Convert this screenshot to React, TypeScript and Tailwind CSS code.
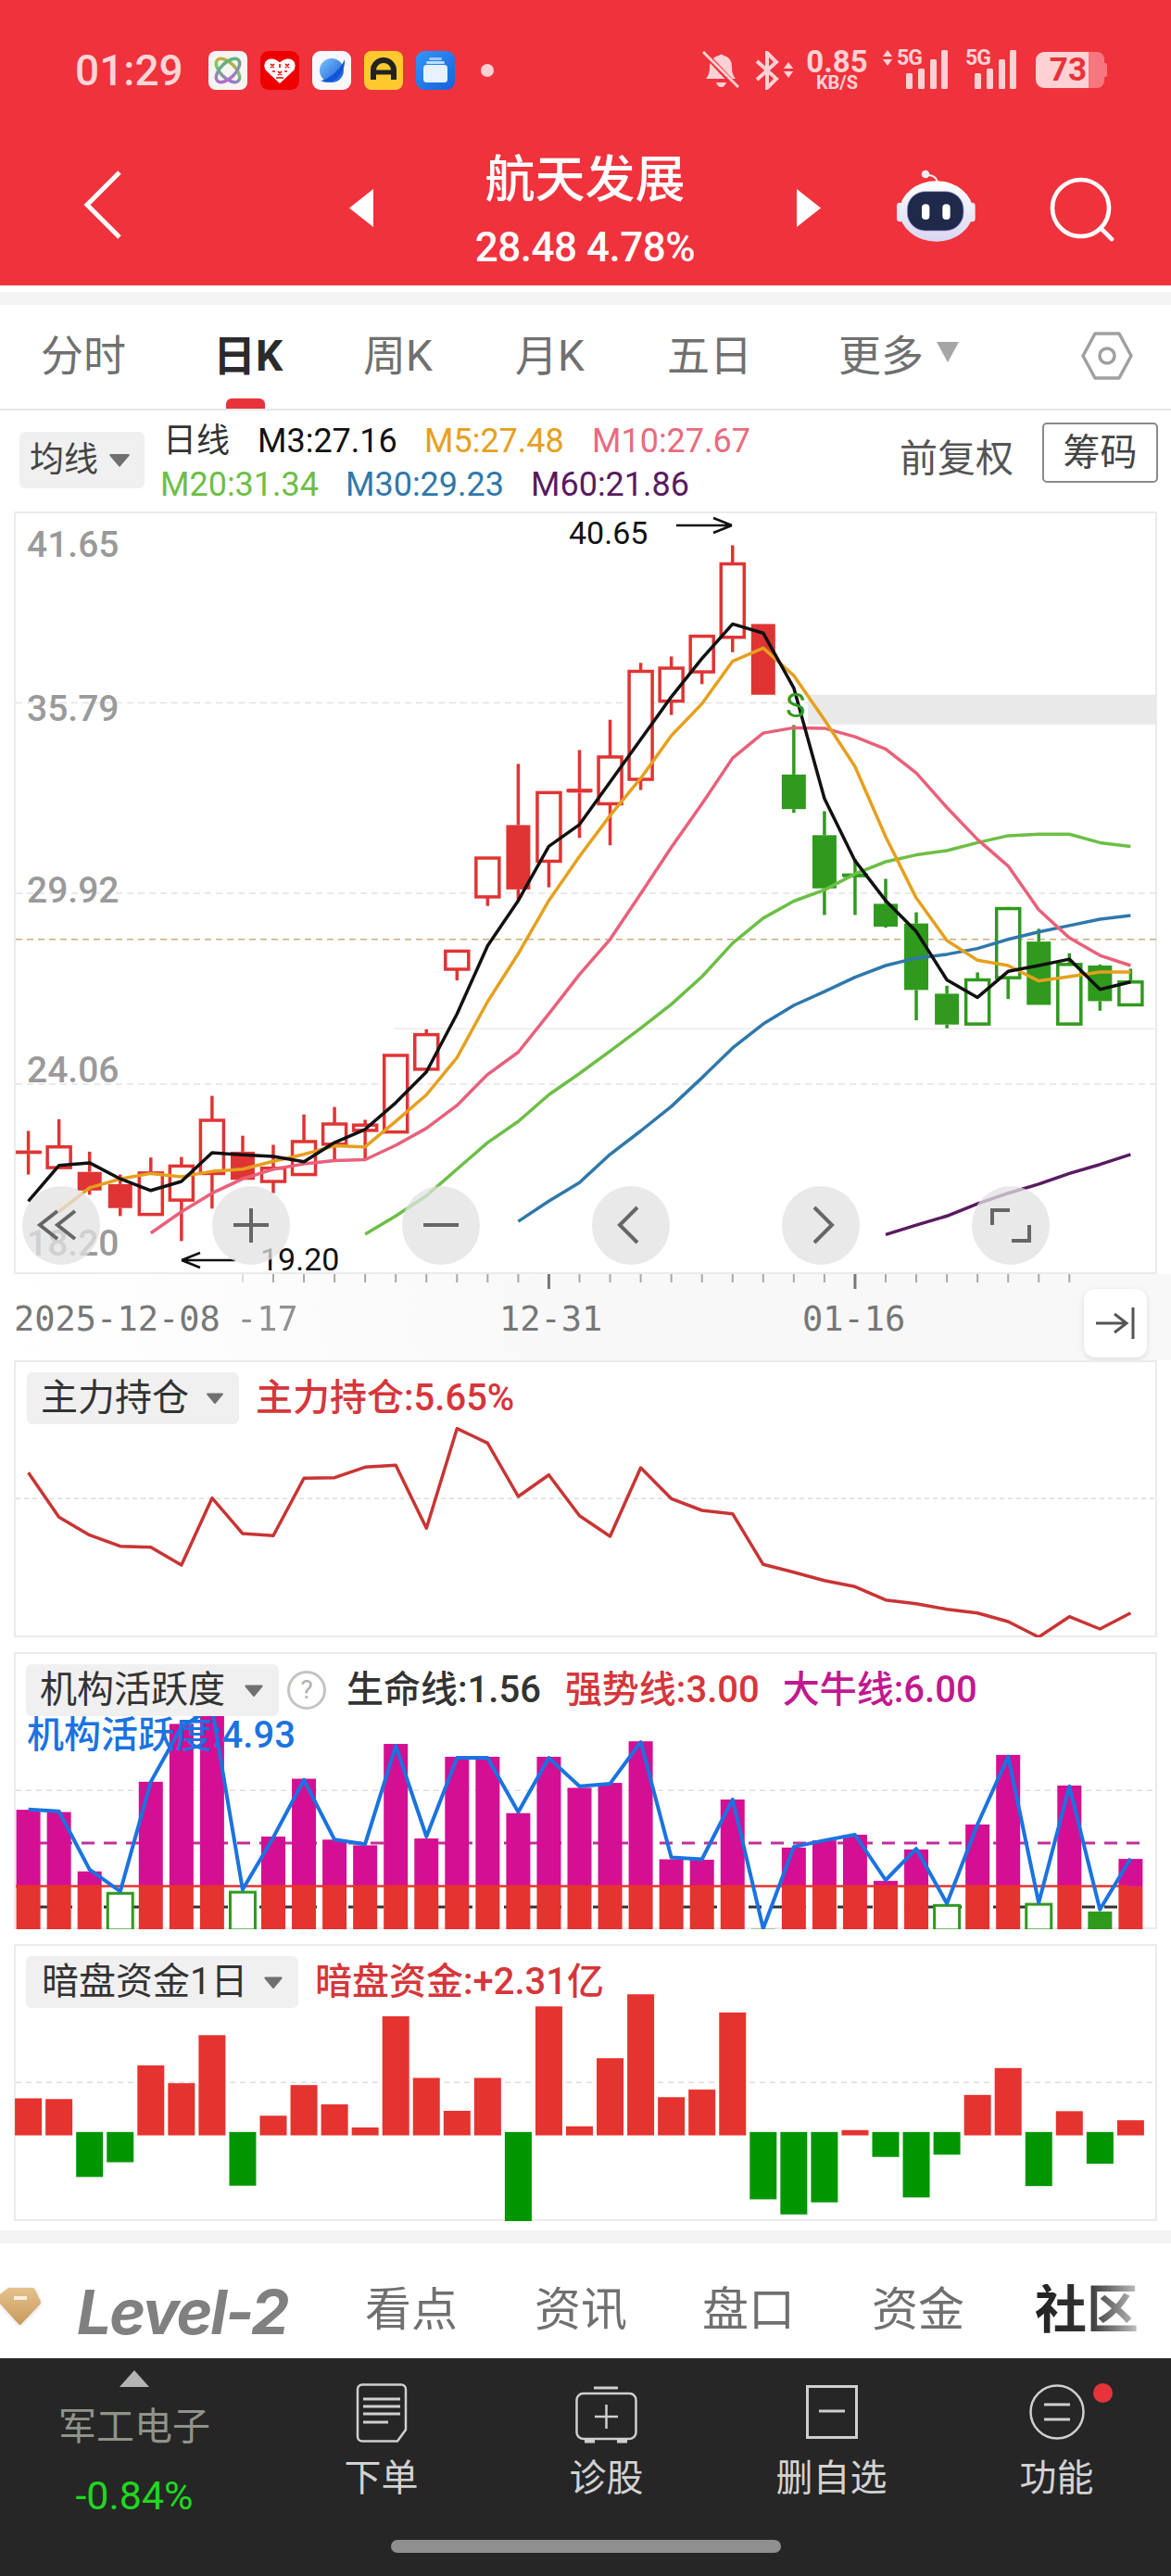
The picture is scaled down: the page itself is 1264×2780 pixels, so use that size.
import React from 'react'

// candle x position shared by every chart
const cx = (i: number) => 30.6 + 33.05 * i
// measurements below are taken off zoomed crops, converted to local chart px here
const kY = (z: number) => z / 1.742 - 2
const holdY = (z: number) => z / 3 - 28
const actY = (z: number) => z / 2.45 - 3
const darkY = (z: number) => z / 2.45 - 318

const pts = (ys: number[], start: number, toY: (z: number) => number) =>
    ys.map((z, i) => `${cx(start + i).toFixed(1)},${toY(z).toFixed(1)}`).join(' ')

type Candle = [number, number, number, number, 'h' | 'f']

const candles: Candle[] = [
    [1168, 1205, 1211, 1250, 'f'], [1146, 1198, 1237, 1237, 'h'], [1207, 1245, 1280, 1288, 'f'], [1250, 1268, 1313, 1328, 'f'],
    [1218, 1247, 1325, 1325, 'h'], [1217, 1234, 1298, 1375, 'h'], [1102, 1148, 1248, 1314, 'h'], [1177, 1207, 1260, 1260, 'f'],
    [1194, 1238, 1263, 1285, 'h'], [1137, 1188, 1250, 1250, 'h'], [1123, 1155, 1193, 1222, 'h'], [1147, 1157, 1167, 1220, 'h'],
    [1026, 1026, 1170, 1170, 'h'], [977, 987, 1052, 1052, 'h'], [830, 830, 864, 885, 'h'], [655, 655, 728, 745, 'h'],
    [478, 593, 714, 735, 'f'], [532, 532, 661, 710, 'h'], [452, 525, 532, 617, 'f'], [395, 465, 553, 631, 'h'],
    [288, 304, 507, 527, 'h'], [276, 298, 360, 386, 'h'], [238, 238, 305, 328, 'h'], [67, 102, 240, 268, 'h'],
    [215, 215, 348, 348, 'f'], [405, 498, 563, 570, 'f'], [567, 612, 712, 762, 'f'], [657, 686, 689, 762, 'f'],
    [694, 741, 784, 786, 'f'], [757, 778, 903, 960, 'f'], [895, 910, 968, 975, 'f'], [870, 884, 967, 967, 'h'],
    [747, 750, 880, 920, 'h'], [788, 812, 931, 931, 'f'], [834, 855, 967, 967, 'h'], [855, 857, 924, 942, 'f'],
    [863, 888, 931, 931, 'h'],
]

const maLines: { start: number; color: string; ys: number[] }[] = [
    { start: 28, color: '#5a1a62', ys: [1363, 1345, 1328, 1305, 1285, 1268, 1248, 1231, 1212] },
    { start: 16, color: '#2f78ab', ys: [1338, 1300, 1265, 1212, 1168, 1122, 1068, 1012, 967, 932, 906, 879, 857, 843, 836, 825, 808, 794, 782, 770, 763] },
    { start: 11, color: '#6cbf45', ys: [1362, 1328, 1290, 1240, 1190, 1150, 1100, 1060, 1018, 975, 930, 878, 815, 768, 736, 715, 685, 662, 649, 641, 626, 613, 610, 610, 626, 633] },
    { start: 4, color: '#e9607a', ys: [1360, 1320, 1285, 1258, 1240, 1230, 1224, 1222, 1195, 1163, 1120, 1062, 1020, 948, 874, 808, 722, 635, 553, 467, 420, 410, 411, 427, 450, 495, 560, 620, 670, 752, 805, 838, 857] },
    { start: 1, color: '#e6a01e', ys: [1320, 1275, 1258, 1248, 1254, 1244, 1240, 1225, 1212, 1196, 1198, 1150, 1100, 1030, 925, 835, 735, 652, 575, 505, 425, 365, 285, 260, 312, 395, 483, 615, 730, 810, 847, 857, 886, 878, 869, 869] },
    { start: 0, color: '#111111', ys: [1300, 1233, 1228, 1258, 1280, 1263, 1209, 1213, 1216, 1226, 1190, 1165, 1115, 1057, 948, 820, 735, 633, 592, 512, 432, 352, 280, 215, 232, 335, 543, 660, 735, 793, 884, 917, 868, 857, 845, 902, 888] },
]

const holdLine = [448, 592, 650, 686, 689, 747, 530, 645, 652, 466, 464, 430, 424, 628, 305, 352, 525, 455, 587, 654, 432, 532, 570, 581, 745, 770, 797, 817, 860, 872, 890, 902, 930, 980, 914, 954, 902]

const actTops = [424, 430, 587, 0, 350, 197, 150, 0, 495, 342, 503, 518, 250, 500, 284, 284, 433, 284, 366, 353, 243, 555, 556, 397, 0, 524, 505, 490, 612, 529, 0, 463, 279, 0, 360, 0, 554]
const actHollow: Record<number, number> = { 3: 645, 7: 642, 30: 677, 33: 674 }
const actLine = [423, 428, 582, 640, 350, 205, 155, 635, 497, 345, 503, 515, 255, 495, 287, 287, 430, 287, 362, 355, 245, 550, 555, 397, 738, 522, 505, 490, 610, 527, 672, 463, 283, 670, 362, 688, 553]

// [edge of the bar away from the zero line, green?]
const darkBars: [number, boolean][] = [
    [1187, false], [1189, false], [1395, true], [1356, true], [1100, false], [1147, false], [1020, false], [1418, true],
    [1233, false], [1152, false], [1203, false], [1264, false], [970, false], [1133, false], [1220, false], [1133, false],
    [1513, true], [944, false], [1261, false], [1081, false], [912, false], [1184, false], [1164, false], [960, false],
    [1454, true], [1494, true], [1462, true], [1271, false], [1342, true], [1449, true], [1336, true], [1178, false],
    [1107, false], [1419, true], [1221, false], [1360, true], [1245, false],
]

const Tri = ({ className }: { className: string }) => (
    <svg viewBox="0 0 20 14" className={className}>
        <path d="M2 1.5h16a1 1 0 0 1 .8 1.6l-8 9.4a1 1 0 0 1-1.6 0l-8-9.4A1 1 0 0 1 2 1.5Z" fill="#707070" />
    </svg>
)

const StatusApps = () => (
    <div className="flex items-center gap-[14px]">
        <svg viewBox="0 0 42 42" className="w-[42px] h-[42px]">
            <defs>
                <linearGradient id="appA" x1="0" y1="0" x2="1" y2="1">
                    <stop offset="0" stopColor="#f59a3c" />
                    <stop offset="0.5" stopColor="#6ccf5e" />
                    <stop offset="1" stopColor="#a35cf0" />
                </linearGradient>
                <linearGradient id="appB" x1="1" y1="0" x2="0" y2="1">
                    <stop offset="0" stopColor="#45c96a" />
                    <stop offset="1" stopColor="#c95ce0" />
                </linearGradient>
            </defs>
            <rect width="42" height="42" rx="8" fill="#f7f4f4" />
            <ellipse cx="21" cy="21" rx="16" ry="8" fill="none" stroke="url(#appA)" strokeWidth="3.5" transform="rotate(45 21 21)" />
            <ellipse cx="21" cy="21" rx="16" ry="8" fill="none" stroke="url(#appB)" strokeWidth="3.5" transform="rotate(-45 21 21)" />
        </svg>
        <svg viewBox="0 0 42 42" className="w-[42px] h-[42px]">
            <rect width="42" height="42" rx="9" fill="#ee0000" />
            <path d="M21 35 6 21c-3.500-5-1-12 5-12.500 4-.3 7.500 1.500 10 4 2.500-2.500 6-4.300 10-4 6 .5 8.500 7.500 5 12.500Z" fill="#fff" />
            <path d="M11 14l4 4M15 14l-4 4M27 14l4 4M31 14l-4 4M19 22l4 4M23 22l-4 4M13 22h3M26 22h3M21 14v4M17 29h8" stroke="#ee0000" strokeWidth="1.600" />
        </svg>
        <svg viewBox="0 0 42 42" className="w-[42px] h-[42px]">
            <defs>
                <linearGradient id="appC" x1="0" y1="0" x2="1" y2="1">
                    <stop offset="0" stopColor="#7cc4fb" />
                    <stop offset="1" stopColor="#1257d8" />
                </linearGradient>
            </defs>
            <rect width="42" height="42" rx="9" fill="#f7f8fb" />
            <circle cx="21" cy="21" r="13" fill="url(#appC)" />
            <path d="M9 32C16 32 31 20 35 9c1 9-5 21-14 24-4 1.300-8 1-12-1Z" fill="#0f55d4" />
        </svg>
        <svg viewBox="0 0 42 42" className="w-[42px] h-[42px]">
            <rect width="42" height="42" rx="8" fill="#fdc92f" />
            <path d="M10 31V21a11 11 0 0 1 22 0v10" fill="none" stroke="#222" strokeWidth="6" />
            <path d="M11 23h20" stroke="#222" strokeWidth="5" />
        </svg>
        <svg viewBox="0 0 42 42" className="w-[42px] h-[42px]">
            <defs>
                <linearGradient id="appE" x1="0" y1="0" x2="1" y2="1">
                    <stop offset="0" stopColor="#2f97fb" />
                    <stop offset="1" stopColor="#1760dc" />
                </linearGradient>
            </defs>
            <rect width="42" height="42" rx="9" fill="url(#appE)" />
            <rect x="14" y="7" width="14" height="3" rx="1.500" fill="#9cc9fb" />
            <rect x="11" y="11" width="20" height="3" rx="1.500" fill="#bcdcfd" />
            <rect x="8" y="15" width="26" height="19" rx="3.500" fill="#e8f2fe" />
        </svg>
    </div>
)

const UpDown = ({ className }: { className: string }) => (
    <svg viewBox="0 0 12 18" className={className}>
        <path d="M6 0l5.500 7.500H.5ZM6 18 .5 10.500h11Z" fill="#ffd1d4" />
    </svg>
)

const Signal = () => (
    <svg viewBox="0 0 46 42" className="w-[46px] h-[42px]">
        <rect x="0" y="25" width="7" height="17" rx="1.500" fill="#ffd1d4" />
        <rect x="13" y="20" width="7" height="22" rx="1.500" fill="#ffd1d4" />
        <rect x="26" y="10" width="7" height="32" rx="1.500" fill="#ffd1d4" />
        <rect x="38" y="0" width="7" height="42" rx="1.500" fill="#ffd1d4" />
    </svg>
)

const StatusRight = () => (
    <div className="ml-auto mr-[69px] flex items-center h-[43px] text-[#ffd1d4]">
        <svg viewBox="0 0 40 42" className="w-[40px] h-[42px]">
            <path d="M18 5a3 3 0 0 1 5 0c6 1 9 6 9 12 0 6 1 9 4 13H4c3-4 4-7 4-13 0-6 4-11 10-12Z" fill="#ffd1d4" />
            <path d="M15 34h11c-1 3-3 5-5.500 5S16 37 15 34Z" fill="#ffd1d4" />
            <path d="M2 2l36 38" stroke="#f0323c" strokeWidth="6" />
            <path d="M1 1l38 38" stroke="#ffd1d4" strokeWidth="3" />
        </svg>
        <div className="ml-[17px] flex items-center w-[42px]">
            <svg viewBox="0 0 26 42" className="w-[26px] h-[42px]">
                <path d="M2 11 23 30 13 40V2l10 10L2 31" fill="none" stroke="#ffd1d4" strokeWidth="4" />
            </svg>
            <UpDown className="ml-[4px] w-[12px] h-[17px]" />
        </div>
        <div className="ml-[12px] w-[69px] flex flex-col items-center font-bold">
            <span className="text-[33px] leading-[25px]">0.85</span>
            <span className="mt-[2px] text-[20px] leading-[17px]">KB/S</span>
        </div>
        <div className="ml-[14px] w-[72px] relative h-[43px]">
            <UpDown className="absolute left-0 top-0 w-[12px] h-[17px]" />
            <span className="absolute left-[16px] top-0 text-[23px] leading-[18px] font-bold tracking-[-1px]">5G</span>
            <div className="absolute right-0 top-0"><Signal /></div>
        </div>
        <div className="ml-[18px] w-[56px] relative h-[43px]">
            <span className="absolute left-0 top-0 text-[23px] leading-[18px] font-bold tracking-[-1px]">5G</span>
            <div className="absolute right-0 top-0"><Signal /></div>
        </div>
        <div className="ml-[20px] w-[77px] h-[39px] flex">
            <div className="w-[57px] h-full bg-[#ffd1d4] rounded-l-[9px] flex items-center justify-end pr-[2px]">
                <span className="text-[35px] leading-none font-bold text-[#e8323a]">73</span>
            </div>
            <div className="w-[17px] h-full bg-[#f6777e] rounded-r-[8px]" />
            <div className="w-[3px] h-[15px] my-auto bg-[#f6777e] rounded-r-[2px]" />
        </div>
    </div>
)

const Robot = () => (
    <svg viewBox="50 30 255 240" className="w-[85px] h-[80px]">
        <defs>
            <linearGradient id="robotShell" x1="0" y1="0" x2="0" y2="1">
                <stop offset="0" stopColor="#ffffff" />
                <stop offset="1" stopColor="#d9d6f0" />
            </linearGradient>
        </defs>
        <path d="M143 50c20 0 36 6 38 24" fill="none" stroke="#f4e9ee" strokeWidth="6" />
        <circle cx="143" cy="48" r="13" fill="#f8eef2" />
        <rect x="50" y="140" width="22" height="62" rx="10" fill="#e9e7f7" />
        <rect x="282" y="140" width="22" height="62" rx="10" fill="#e9e7f7" />
        <ellipse cx="178" cy="168" rx="119" ry="98" fill="url(#robotShell)" />
        <rect x="84" y="104" width="182" height="127" rx="58" fill="#1f2a4b" stroke="#a48fe6" strokeWidth="2" />
        <rect x="131" y="145" width="25" height="50" rx="12" fill="#fff" />
        <rect x="198" y="145" width="25" height="50" rx="12" fill="#fff" />
    </svg>
)

const Header = () => (
    <div className="h-[308px] bg-[#f0323c] pt-[54px]">
        <div className="flex items-center h-[43px] pl-[81px]">
            <span className="w-[144px] text-[46px] leading-none font-medium text-[#fbd5d7]">01:29</span>
            <StatusApps />
            <span className="ml-[28px] w-[14px] h-[14px] rounded-full bg-[#ffd1d4]" />
            <StatusRight />
        </div>
        <div className="mt-[69px] flex items-start pl-[90px]">
            <svg viewBox="0 0 42 74" className="mt-[18px] w-[42px] h-[74px]">
                <path d="M39 2 4 37l35 35" fill="none" stroke="#fff" strokeWidth="5" />
            </svg>
            <svg viewBox="0 0 26 41" className="ml-[245px] mt-[38px] w-[26px] h-[41px]">
                <path d="M26 0v41L0 20.500Z" fill="#fff" />
            </svg>
            <div className="w-[457px] flex flex-col items-center text-white">
                <span className="text-[54px] leading-[58px] font-medium">航天发展</span>
                <span className="mt-[18px] text-[44px] leading-[50px] font-medium tracking-[-0.5px]">28.48 4.78%</span>
            </div>
            <svg viewBox="0 0 26 41" className="mt-[38px] w-[26px] h-[41px]">
                <path d="M0 0v41l26-20.500Z" fill="#fff" />
            </svg>
            <div className="ml-[82px] mt-[16px]"><Robot /></div>
            <svg viewBox="540 50 215 220" className="ml-[79px] mt-[23px] w-[72px] h-[73px]">
                <circle cx="643" cy="157" r="92" fill="none" stroke="#fff" strokeWidth="14" />
                <path d="M708 222l36 36" stroke="#fff" strokeWidth="14" strokeLinecap="round" />
            </svg>
        </div>
    </div>
)

const TabBar = () => (
    <div className="relative h-[114px] border-b-2 border-[#e6e6e6] flex items-center pl-[44px] pb-[2px] text-[46px] leading-none whitespace-nowrap text-[#707070]">
        <span className="w-[93px]">分时</span>
        <span className="ml-[93px] w-[77px] font-bold text-[#2b2b2b]">日K</span>
        <span className="ml-[85px] w-[78px]">周K</span>
        <span className="ml-[86px] w-[78px]">月K</span>
        <span className="ml-[86px] w-[93px]">五日</span>
        <span className="ml-[92px] w-[93px]">更多</span>
        <svg viewBox="0 0 26 22" className="ml-[12px] -mt-[8px] w-[26px] h-[22px]">
            <path d="M1 0h24L13 22Z" fill="#a6a6a6" />
        </svg>
        <svg viewBox="0 0 56 54" className="ml-[131px] w-[56px] h-[54px]">
            <path d="M15 3h26l13 24-13 24H15L2 27Z" fill="none" stroke="#a0a0a0" strokeWidth="3.500" strokeLinejoin="round" />
            <circle cx="28" cy="27" r="8" fill="none" stroke="#a0a0a0" strokeWidth="3.500" />
        </svg>
        <span className="absolute left-[244px] bottom-0 w-[42px] h-[11px] rounded-t-[6px] bg-[#e8333a]" />
    </div>
)

const Legend = () => (
    <div className="flex h-[109px]">
        <div className="ml-[21px] mt-[23px] w-[135px] h-[61px] rounded-[6px] bg-[#f0f0f0] flex items-center pl-[11px]">
            <span className="text-[37px] leading-none text-[#444]">均线</span>
            <Tri className="ml-[11px] w-[24px] h-[17px]" />
        </div>
        <div className="ml-[20px] mt-[10px] text-[36px] leading-[47px]">
            <div className="flex">
                <span className="w-[102px] text-[#333]">日线</span>
                <span className="w-[180px] text-[#111]">M3:27.16</span>
                <span className="w-[181px] text-[#e6a01e]">M5:27.48</span>
                <span className="text-[#ea6a7e]">M10:27.67</span>
            </div>
            <div className="flex -ml-[3px]">
                <span className="w-[200px] text-[#6cbf45]">M20:31.34</span>
                <span className="w-[200px] text-[#2f78ab]">M30:29.23</span>
                <span className="text-[#5a1a62]">M60:21.86</span>
            </div>
        </div>
        <span className="ml-auto mt-[27px] text-[41px] leading-[50px] text-[#555]">前复权</span>
        <div className="ml-[31px] mr-[14px] mt-[13px] w-[125px] h-[65px] rounded-[5px] border-2 border-[#8a8a8a] flex items-center justify-center text-[40px] leading-none text-[#444]">
            筹码
        </div>
    </div>
)

const priceLabels: [string, string][] = [
    ['41.65', 'top-[13px]'], ['35.79', 'top-[190px]'], ['29.92', 'top-[386px]'], ['24.06', 'top-[580px]'], ['18.20', 'top-[767px]'],
]

const RoundBtn = ({ className, children }: { className: string; children: React.ReactNode }) => (
    <div className={`absolute top-[728px] w-[84px] h-[85px] rounded-full bg-[#e2e2e2]/75 flex items-center justify-center ${className}`}>
        <svg viewBox="0 0 84 85" className="w-[84px] h-[85px]" fill="none" stroke="#666" strokeWidth="4">
            {children}
        </svg>
    </div>
)

const KChart = () => (
    <div className="relative h-[823px]">
        <div className="mx-[15px] h-full border-2 border-[#ebebeb]" />
        <svg viewBox="0 0 1264 823" className="absolute inset-0 w-full h-full">
            {[363, 721, 1080].map(z => (
                <line key={z} x1="17" x2="1248" y1={kY(z)} y2={kY(z)} stroke="#e4e4e4" strokeWidth="1.5" strokeDasharray="7 5" />
            ))}
            <line x1="425" x2="1248" y1={kY(976)} y2={kY(976)} stroke="#ececec" strokeWidth="1.5" />
            <line x1="17" x2="1248" y1={kY(808)} y2={kY(808)} stroke="#c9ae7d" strokeWidth="1.5" strokeDasharray="7 5" />
            <rect x="872" y={kY(348)} width="376" height="32" fill="#e9e9e9" />
            {candles.map(([high, top, bottom, low, kind], i) => {
                const color = i < 25 ? '#e03434' : '#2f9a1d'
                const x = cx(i)
                return (
                    <g key={i}>
                        <line x1={x} x2={x} y1={kY(high)} y2={kY(top)} stroke={color} strokeWidth="3.5" />
                        <line x1={x} x2={x} y1={kY(bottom)} y2={kY(low)} stroke={color} strokeWidth="3.5" />
                        {kind === 'h' ? (
                            <rect x={x - 12.5} y={kY(top)} width="25" height={kY(bottom) - kY(top)} fill="#fff" stroke={color} strokeWidth="3.5" />
                        ) : (
                            <rect x={x - 13} y={kY(top)} width="26" height={Math.max(3, kY(bottom) - kY(top))} fill={color} />
                        )}
                    </g>
                )
            })}
            <line x1="17" x2="45" y1={kY(1208)} y2={kY(1208)} stroke="#e03434" strokeWidth="3.5" />
            <line x1={cx(18) - 14} x2={cx(18) + 14} y1={kY(528)} y2={kY(528)} stroke="#e03434" strokeWidth="3.5" />
            <line x1={cx(27) - 14} x2={cx(27) + 14} y1={kY(687)} y2={kY(687)} stroke="#2f9a1d" strokeWidth="3.5" />
            {maLines.map(l => (
                <polyline key={l.color} points={pts(l.ys, l.start, kY)} fill="none" stroke={l.color} strokeWidth="3.5" strokeLinejoin="round" />
            ))}
            <path d="M196 808h58M196 808l20-8M196 808l20 8" fill="none" stroke="#111" strokeWidth="2.500" />
            <path d="M730 15h60M790 15l-20-8M790 15l-20 8" fill="none" stroke="#111" strokeWidth="2.500" />
        </svg>
        {priceLabels.map(([t, pos]) => (
            <span key={t} className={`absolute left-[29px] text-[39px] leading-[46px] font-medium text-[#9a9a9a] ${pos}`}>{t}</span>
        ))}
        <span className="absolute left-[614px] top-[2px] text-[34px] leading-[42px] text-[#111]">40.65</span>
        <span className="absolute left-[281px] top-[786px] text-[34px] leading-[42px] text-[#111]">19.20</span>
        <span className="absolute left-[848px] top-[190px] text-[36px] leading-[40px] text-[#2f9a1d]">S</span>
        <RoundBtn className="left-[24px]">
            <path d="M38 27 19 42l19 15M57 27 38 42l19 15" />
        </RoundBtn>
        <RoundBtn className="left-[229px]">
            <path d="M23 42h38M42 24v37" />
        </RoundBtn>
        <RoundBtn className="left-[434px]">
            <path d="M23 42h38" />
        </RoundBtn>
        <RoundBtn className="left-[639px]">
            <path d="M49 23 30 42l19 19" />
        </RoundBtn>
        <RoundBtn className="left-[844px]">
            <path d="M35 23l19 19-19 19" />
        </RoundBtn>
        <RoundBtn className="left-[1049px]">
            <path d="M22 42V26h19M62 42v17H43" />
        </RoundBtn>
    </div>
)

const AxisRow = () => (
    <div className="relative h-[93px] bg-gradient-to-r from-white via-[#f8f8f8] to-[#f8f8f8]">
        <svg viewBox="0 0 1264 18" className="w-full h-[18px] block">
            {Array.from({ length: 28 }).map((_, i) => {
                const idx = i + 7
                const big = idx === 17 || idx === 27
                return (
                    <line key={i} x1={cx(idx)} x2={cx(idx)} y1="0" y2={big ? 16 : 9}
                        stroke={big ? '#777' : idx === 7 ? '#ddd' : '#a8a8a8'} strokeWidth={big ? 3 : 2} />
                )
            })}
        </svg>
        <div className="flex pl-[15px] mt-[11px] font-['DejaVu_Sans_Mono'] text-[37px] leading-[40px] text-[#777]">
            <span className="w-[240px]">2025-12-08</span>
            <span className="w-[284px] opacity-80">-17</span>
            <span className="w-[327px]">12-31</span>
            <span>01-16</span>
        </div>
        <div className="absolute left-[1170px] top-[16px] w-[68px] h-[74px] rounded-[12px] bg-white shadow-[0_2px_6px_rgba(0,0,0,0.12)] flex items-center justify-center">
            <svg viewBox="0 0 42 34" className="w-[42px] h-[34px]" fill="none" stroke="#555" strokeWidth="3">
                <path d="M0 17h32M20 7l13 10-13 10M40 0v34" />
            </svg>
        </div>
    </div>
)

const Chip = ({ text, className }: { text: string; className: string }) => (
    <div className={`h-[56px] rounded-[6px] bg-[#f0f0f0] flex items-center text-[40px] leading-none text-[#333] ${className}`}>
        <span>{text}</span>
    </div>
)

const Panel = ({ children, chart, className }: { children: React.ReactNode; chart: React.ReactNode; className?: string }) => (
    <div className={`relative h-[299px] ${className ?? ''}`}>
        <div className="mx-[15px] h-full border-2 border-[#ebebeb]" />
        <svg viewBox="0 0 1264 299" className="absolute inset-0 w-full h-full">{chart}</svg>
        {children}
    </div>
)

const HoldPanel = () => (
    <Panel
        chart={
            <>
                <line x1="17" x2="1248" y1={holdY(532)} y2={holdY(532)} stroke="#dedede" strokeWidth="1.5" strokeDasharray="5 4" />
                <polyline points={pts(holdLine, 0, holdY)} fill="none" stroke="#c93434" strokeWidth="3.5" strokeLinejoin="round" />
            </>
        }
    >
        <div className="absolute left-[29px] top-[13px] flex items-center">
            <Chip text="主力持仓" className="w-[229px] pl-[15px]" />
            <Tri className="-ml-[36px] w-[20px] h-[14px]" />
            <span className="ml-[34px] text-[40px] leading-none font-medium text-[#d6363a]">主力持仓:5.65%</span>
        </div>
    </Panel>
)

const ActivityPanel = () => (
    <Panel
        className="mt-[16px]"
        chart={
            <>
                <line x1="17" x2="1248" y1={actY(373)} y2={actY(373)} stroke="#dedede" strokeWidth="1.5" strokeDasharray="6 5" />
                <line x1="40" x2="1232" y1={actY(681)} y2={actY(681)} stroke="#333" strokeWidth="3" strokeDasharray="14 10" />
                <line x1="40" x2="1232" y1={actY(512)} y2={actY(512)} stroke="#c0319a" strokeWidth="3" strokeDasharray="14 10" />
                {actTops.map((top, i) => {
                    const x = cx(i) - 13
                    if (i in actHollow) {
                        return <rect key={i} x={x - 0.5} y={actY(actHollow[i])} width="27" height={actY(742) - actY(actHollow[i])} fill="#fff" stroke="#2f9a1d" strokeWidth="3" />
                    }
                    if (i === 35) return <rect key={i} x={x} y={actY(693)} width="26" height={actY(742) - actY(693)} fill="#2f9a1d" />
                    if (i === 24) return <rect key={i} x={x} y={actY(739)} width="26" height="2" fill="#2f9a1d" />
                    return (
                        <g key={i}>
                            <rect x={x} y={actY(top)} width="26" height={actY(627) - actY(top)} fill="#d40f93" />
                            <rect x={x} y={actY(627)} width="26" height={actY(742) - actY(627)} fill="#e5332f" />
                        </g>
                    )
                })}
                <line x1="17" x2="1218" y1={actY(626)} y2={actY(626)} stroke="#e5332f" strokeWidth="2.500" />
                <polyline points={pts(actLine, 0, actY)} fill="none" stroke="#1a73e0" strokeWidth="4" strokeLinejoin="round" />
            </>
        }
    >
        <div className="absolute left-[28px] top-[13px] flex items-center">
            <Chip text="机构活跃度" className="w-[273px] pl-[15px]" />
            <Tri className="-ml-[38px] w-[22px] h-[15px]" />
            <span className="ml-[25px] w-[42px] h-[42px] rounded-full border-[3px] border-[#c4c4c4] flex items-center justify-center text-[28px] leading-none text-[#b0b0b0]">?</span>
            <span className="ml-[22px] text-[40px] leading-none font-medium text-[#333]">生命线:1.56</span>
            <span className="ml-[26px] text-[40px] leading-none font-medium text-[#d6363a]">强势线:3.00</span>
            <span className="ml-[25px] text-[40px] leading-none font-medium text-[#c2188f]">大牛线:6.00</span>
        </div>
        <span className="absolute left-[29px] top-[70px] text-[40px] leading-none font-medium text-[#1a73e0]">机构活跃度:4.93</span>
    </Panel>
)

const DarkPanel = () => (
    <Panel
        className="mt-[16px]"
        chart={
            <>
                <line x1="17" x2="1248" y1={darkY(1145)} y2={darkY(1145)} stroke="#dedede" strokeWidth="1.5" strokeDasharray="6 5" />
                {darkBars.map(([edge, green], i) => {
                    const top = green ? darkY(1276) : darkY(edge)
                    const bottom = green ? darkY(edge) : darkY(1285)
                    return <rect key={i} x={cx(i) - 14.5} y={top} width="29" height={bottom - top} fill={green ? '#009600' : '#e5332f'} />
                })}
            </>
        }
    >
        <div className="absolute left-[28px] top-[13px] flex items-center">
            <Chip text="暗盘资金1日" className="w-[294px] pl-[17px]" />
            <Tri className="-ml-[38px] w-[22px] h-[15px]" />
            <span className="ml-[34px] text-[40px] leading-none font-medium text-[#d6363a]">暗盘资金:+2.31亿</span>
        </div>
    </Panel>
)

const BottomTabs = () => (
    <div className="h-[124px] flex items-start pt-[47px] text-[50px] leading-none text-[#707070]">
        <svg viewBox="0 0 44 42" className="w-[44px] h-[42px] drop-shadow-sm">
            <defs>
                <linearGradient id="gem" x1="0" y1="0" x2="0" y2="1">
                    <stop offset="0" stopColor="#e4c28c" />
                    <stop offset="1" stopColor="#c79a5c" />
                </linearGradient>
            </defs>
            <path d="M9 1h26a3 3 0 0 1 3 2l6 13a3 3 0 0 1-1 3L23 40a2 2 0 0 1-3 0L1 19a3 3 0 0 1-1-3V8Z" fill="url(#gem)" />
            <rect x="15" y="10" width="14" height="4" fill="#f8efe0" />
        </svg>
        <span className="ml-[39px] -mt-[6px] w-[267px] text-[66px] font-bold italic font-['Inter'] tracking-[-2px] text-[#808080]">Level-2</span>
        <span className="ml-[44px] w-[100px]">看点</span>
        <span className="ml-[83px] w-[100px]">资讯</span>
        <span className="ml-[81px] w-[100px]">盘口</span>
        <span className="ml-[83px] w-[100px]">资金</span>
        <span className="ml-[76px] font-bold text-[56px] -mt-[3px] bg-gradient-to-r from-[#222] via-[#333] to-[#c4c4c4] bg-clip-text text-transparent">社区</span>
    </div>
)

const FootAction = ({ label, children }: { label: string; children: React.ReactNode }) => (
    <div className="w-[243px] flex flex-col items-center pt-[27px]">
        <div className="relative h-[64px] flex items-start justify-center">{children}</div>
        <span className="mt-[17px] text-[40px] leading-[44px] text-[#d2d2d2]">{label}</span>
    </div>
)

const Footer = () => (
    <div className="relative h-[235px] bg-[#262626] flex items-start">
        <div className="w-[290px] flex flex-col items-center pt-[13px]">
            <svg viewBox="0 0 32 18" className="w-[32px] h-[18px]">
                <path d="M16 0l16 18H0Z" fill="#b4b4b4" />
            </svg>
            <span className="mt-[19px] text-[41px] leading-[48px] text-[#8f9488]">军工电子</span>
            <span className="mt-[25px] text-[43px] leading-[50px] text-[#1fd81f]">-0.84%</span>
        </div>
        <FootAction label="下单">
            <svg viewBox="0 0 56 64" className="w-[56px] h-[64px]" fill="none" stroke="#cfcfcf" strokeWidth="2.500">
                <path d="M7 1.500h42a5 5 0 0 1 5 5V50l-9 12.500H7a5 5 0 0 1-5-5v-51a5 5 0 0 1 5-5Z" />
                <path d="M8 17h40M8 25h40M8 33h40M8 42h27" strokeWidth="3" />
            </svg>
        </FootAction>
        <FootAction label="诊股">
            <svg viewBox="0 0 67 62" className="w-[67px] h-[62px] mt-[3px]" fill="none" stroke="#cfcfcf" strokeWidth="2.500">
                <path d="M20 2h26" strokeWidth="3" />
                <rect x="1.500" y="8" width="64" height="49" rx="7" />
                <path d="M33.500 20v26M21 33h25" strokeWidth="2.500" />
                <path d="M10 59h11M45 59h11" strokeWidth="5" />
            </svg>
        </FootAction>
        <FootAction label="删自选">
            <svg viewBox="0 0 56 58" className="w-[56px] h-[58px] mt-[2px]" fill="none" stroke="#cfcfcf" strokeWidth="3">
                <rect x="1.500" y="1.500" width="53" height="55" />
                <path d="M14 28h28" />
            </svg>
        </FootAction>
        <FootAction label="功能">
            <svg viewBox="0 0 60 60" className="w-[60px] h-[60px] mt-[1px]" fill="none" stroke="#cfcfcf" strokeWidth="2.500">
                <circle cx="30" cy="30" r="28.500" />
                <path d="M16 22h28M16 38h28" strokeWidth="3" />
            </svg>
            <span className="absolute left-[69px] top-0 w-[21px] h-[21px] rounded-full bg-[#e8333a]" />
        </FootAction>
        <span className="absolute left-[422px] top-[196px] w-[421px] h-[14px] rounded-full bg-[#8f8f8f]" />
    </div>
)

const App = () => {
    return (
        <div className="w-[1264px] h-[2780px] overflow-hidden bg-white font-['Roboto','Noto_Sans_CJK_SC',sans-serif]">
            <Header />
            <div className="h-[21px] pt-[7px]">
                <div className="h-[14px] bg-[#f4f4f4]" />
            </div>
            <TabBar />
            <Legend />
            <KChart />
            <AxisRow />
            <HoldPanel />
            <ActivityPanel />
            <DarkPanel />
            <div className="h-[10px]" />
            <div className="h-[14px] bg-[#f4f4f4]" />
            <BottomTabs />
            <Footer />
        </div>
    )
}

export default App
